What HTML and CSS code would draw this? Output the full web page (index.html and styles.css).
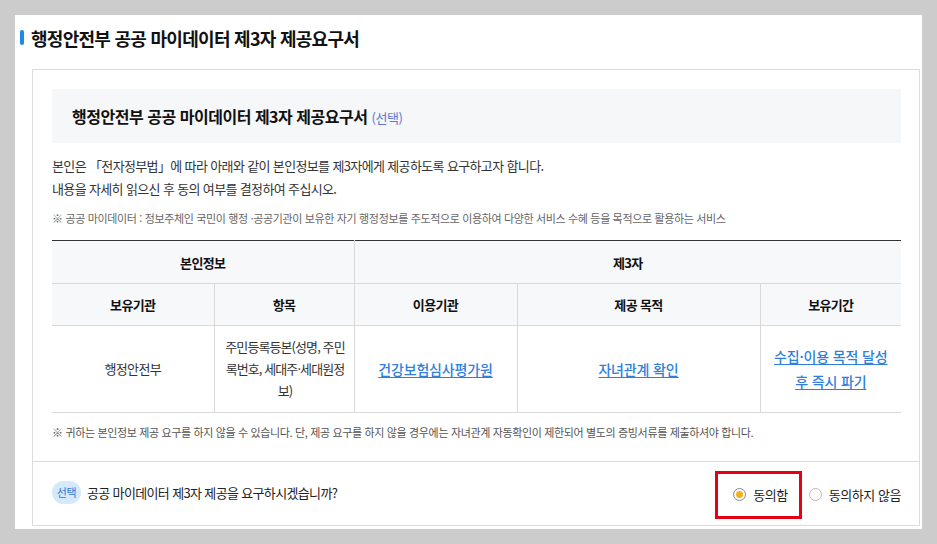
FILE: index.html
```html
<!DOCTYPE html>
<html lang="ko">
<head>
<meta charset="utf-8">
<title>행정안전부 공공 마이데이터 제3자 제공요구서</title>
<link rel="stylesheet" href="styles.css">
</head>
<body>
<div class="page">
  <div class="panel">
    <h1 class="page-title">행정안전부 공공 마이데이터 제3자 제공요구서</h1>
    <div class="box">
      <div class="box-body">
        <div class="box-head">
          <h2 class="box-title">행정안전부 공공 마이데이터 제3자 제공요구서 <span class="opt">(선택)</span></h2>
        </div>
        <p class="intro">본인은 「전자정부법」에 따라 아래와 같이 본인정보를 제3자에게 제공하도록 요구하고자 합니다.<br>내용을 자세히 읽으신 후 동의 여부를 결정하여 주십시오.</p>
        <p class="note">※ 공공 마이데이터 : 정보주체인 국민이 행정 ·공공기관이 보유한 자기 행정정보를 주도적으로 이용하여 다양한 서비스 수혜 등을 목적으로 활용하는 서비스</p>
        <table class="info">
          <colgroup>
            <col class="c1"><col class="c2"><col class="c3"><col class="c4"><col class="c5">
          </colgroup>
          <thead>
            <tr class="r1">
              <th colspan="2">본인정보</th>
              <th colspan="3">제3자</th>
            </tr>
            <tr class="r2">
              <th>보유기관</th>
              <th>항목</th>
              <th>이용기관</th>
              <th>제공 목적</th>
              <th>보유기간</th>
            </tr>
          </thead>
          <tbody>
            <tr class="r3">
              <td>행정안전부</td>
              <td class="items">주민등록등본(성명, 주민<br>록번호, 세대주·세대원정<br>보)</td>
              <td><a href="#" class="link">건강보험심사평가원</a></td>
              <td><a href="#" class="link">자녀관계 확인</a></td>
              <td class="period"><a href="#" class="link">수집·이용 목적 달성 후 즉시 파기</a></td>
            </tr>
          </tbody>
        </table>
        <p class="foot">※ 귀하는 본인정보 제공 요구를 하지 않을 수 있습니다. 단, 제공 요구를 하지 않을 경우에는 자녀관계 자동확인이 제한되어 별도의 증빙서류를 제출하셔야 합니다.</p>
      </div>
      <div class="answer">
        <div class="question"><span class="badge">선택</span><span class="q-text">공공 마이데이터 제3자 제공을 요구하시겠습니까?</span></div>
        <div class="choices">
          <label class="choice highlight"><span class="radio checked"></span><span>동의함</span></label>
          <label class="choice"><span class="radio"></span><span>동의하지 않음</span></label>
        </div>
      </div>
    </div>
  </div>
</div>
</body>
</html>
```
FILE: styles.css
```css
* { box-sizing: border-box; }
html, body { margin: 0; padding: 0; }
body {
  background: #cccccc;
  font-family: "Noto Sans CJK KR", "Noto Sans", sans-serif;
  color: #333;
  letter-spacing: -0.04em;
}
.page {
  width: 937px;
  height: 544px;
  padding: 15px 0 0 15px;
  overflow: hidden;
}
.panel {
  width: 907px;
  background: #fff;
  padding: 0 2px 3px 17px;
}
.page-title {
  margin: 0 0 0 -15px;
  height: 54px;
  display: flex;
  align-items: center;
  padding: 0 0 9px 15px;
  font-size: 18px;
  font-weight: 700;
  color: #111;
  letter-spacing: -0.04em;
}
.page-title::before {
  content: "";
  display: block;
  width: 4px;
  height: 15px;
  border-radius: 2px;
  background: #1a8ae5;
  margin-left: -12px;
  margin-right: 7px;
}
.box {
  border: 1px solid #dcdcdc;
}
.box-body {
  padding: 19px 18px 20px 19px;
}
.box-head {
  background: #f6f7f9;
  height: 54px;
  display: flex;
  align-items: center;
  padding-left: 20px;
}
.box-title {
  margin: 0;
  font-size: 16px;
  font-weight: 700;
  color: #111;
  letter-spacing: -0.03em;
}
.opt {
  font-size: 13px;
  font-weight: 400;
  color: #5d79d8;
}
.intro {
  margin: 11px 0 0;
  font-size: 13px;
  line-height: 23px;
  color: #333;
}
.note {
  margin: 9px 0 0;
  font-size: 11px;
  line-height: 18px;
  color: #666;
  letter-spacing: -0.032em;
}
.info {
  margin-top: 13px;
  width: 849px;
  border-collapse: collapse;
  table-layout: fixed;
  border-top: 1px solid #333;
}
.c1 { width: 162px; }
.c2 { width: 140px; }
.c3 { width: 163px; }
.c4 { width: 243px; }
.c5 { width: 141px; }
.info th, .info td {
  border: 1px solid #d9d9d9;
  text-align: center;
  font-size: 13px;
  padding: 0;
}
.info tr > :first-child { border-left: 0; }
.info tr > :last-child { border-right: 0; }
.info thead tr:first-child th { border-top: 0; }
.info th {
  background: #f7f8fa;
  font-weight: 700;
  color: #111;
}
.r1 th { height: 43px; }
.r2 th { height: 42px; }
.r3 td { height: 87px; line-height: 22px; color: #333; }
.info td.items { padding: 0 4px 0 6px; letter-spacing: -0.07em; }
.info td.period { padding: 0 13px; line-height: 24px; }
.link {
  color: #2f7fdb;
  font-size: 14px;
  font-weight: 500;
  letter-spacing: -0.01em;
  text-decoration: underline;
  text-underline-offset: 2px;
}
.foot {
  margin: 10px 0 0;
  font-size: 11px;
  line-height: 18px;
  color: #555;
  letter-spacing: -0.032em;
}
.answer {
  border-top: 1px solid #dcdcdc;
  height: 64px;
  display: flex;
  align-items: center;
  justify-content: space-between;
  padding: 0 18px 0 19px;
}
.question {
  display: flex;
  align-items: center;
  gap: 6px;
  margin-top: -3px;
}
.badge {
  display: inline-flex;
  align-items: center;
  justify-content: center;
  width: 29px;
  height: 23px;
  border-radius: 12px;
  background: #d4e9fb;
  color: #2d7bd3;
  font-size: 11px;
  letter-spacing: -0.04em;
}
.q-text {
  font-size: 13px;
  color: #222;
  letter-spacing: -0.05em;
}
.choices {
  display: flex;
  align-items: center;
  gap: 7px;
  padding-top: 2px;
}
.choice {
  display: flex;
  align-items: center;
  gap: 7px;
  font-size: 13px;
  color: #222;
  letter-spacing: -0.035em;
}
.choice.highlight {
  border: 3px solid #e60012;
  height: 48px;
  padding: 0 11px 0 15px;
}
.radio {
  width: 13px;
  height: 13px;
  border-radius: 50%;
  border: 1px solid #bbb;
  background: #fff;
  display: flex;
  align-items: center;
  justify-content: center;
}
.radio.checked { border-color: #888; }
.radio.checked::after {
  content: "";
  width: 7px;
  height: 7px;
  border-radius: 50%;
  background: #f7b01a;
}
```
